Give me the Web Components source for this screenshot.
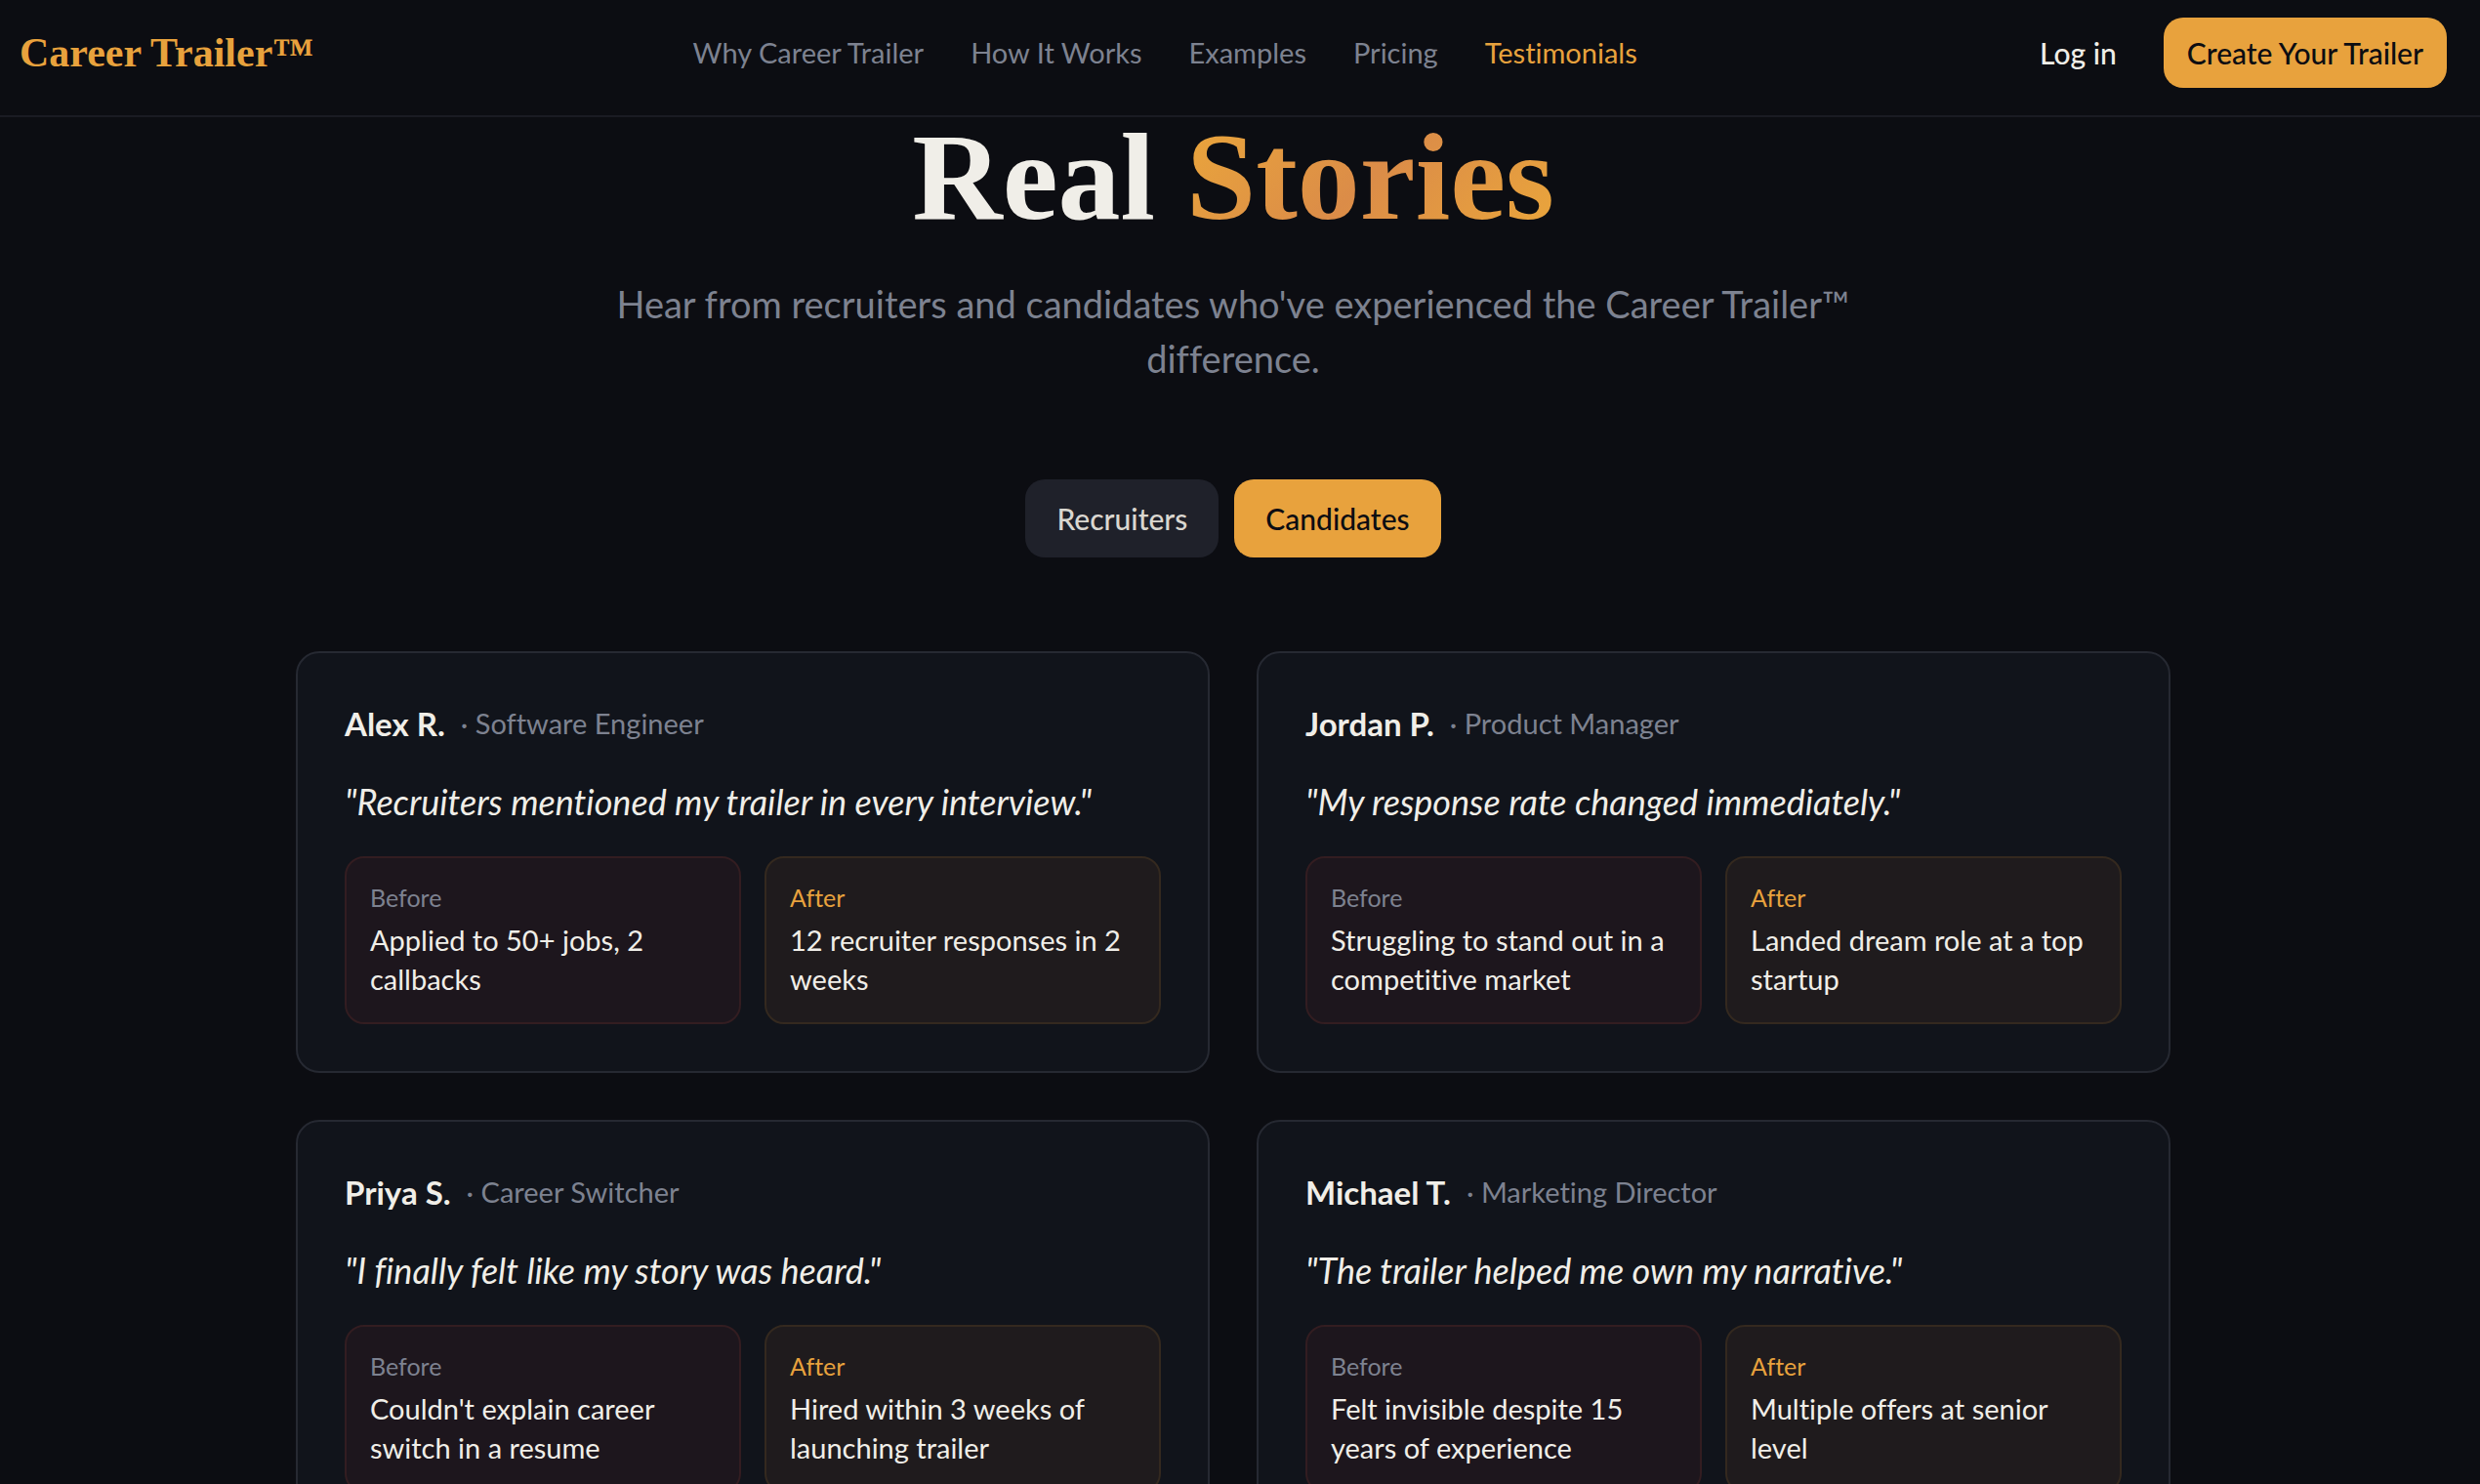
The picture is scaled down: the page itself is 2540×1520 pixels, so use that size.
<!DOCTYPE html>
<html lang="en">
<head>
<meta charset="utf-8">
<title>Career Trailer™ – Real Stories</title>
<style>
:root{
  --bg:#0c0d12;--line:#1a1b23;--card:#11141b;--card-line:#262932;
  --gold:#e8a23d;--ink:#f0eee8;--muted:#7d8290;--gutter:14px;
  --serif:"Liberation Serif",serif;
}
html,body{margin:0;height:100%;background:var(--bg)}
body{overflow:hidden;color:var(--ink);font:400 29px/40px Lato,"Liberation Sans",sans-serif;font-variant-ligatures:none}
</style>
</head>
<body>
<career-page></career-page>
<script>
function define(name, html){
  const template = document.createElement('template');
  template.innerHTML = html;
  customElements.define(name, class extends HTMLElement{
    constructor(){
      super();
      this.attachShadow({mode:'open'}).append(template.content.cloneNode(true));
    }
  });
}

define('site-header', `
<style>
:host{display:block;border-bottom:2px solid var(--line)}
header{display:flex;align-items:center;justify-content:space-between;padding:18px calc(20px + var(--gutter)) 28px 20px}
a{color:inherit;text-decoration:none}
.logo{font:700 42px/56px var(--serif);color:var(--gold)}
nav{display:flex;gap:48px;color:var(--muted)}
nav a[aria-current]{color:var(--gold)}
.actions{display:flex;align-items:center;gap:24px;font-size:30px;font-weight:500}
.login{padding:0 24px}
button{font:inherit;border:0;border-radius:20px;padding:16px 24px;background:var(--gold);color:var(--bg)}
</style>
<header>
  <a class="logo" href="#">Career Trailer™</a>
  <nav>
    <a href="#why">Why Career Trailer</a><a href="#how">How It Works</a><a href="#examples">Examples</a><a href="#pricing">Pricing</a><a href="#testimonials" aria-current="page">Testimonials</a>
  </nav>
  <div class="actions"><a class="login" href="#login">Log in</a><button type="button">Create Your Trailer</button></div>
</header>`);

define('page-hero', `
<style>
:host{display:block;text-align:center}
h1{margin:0 0 40px;font:700 128px/123px var(--serif)}
.accent{color:transparent;background:linear-gradient(135deg,#e8a23d 10%,#db8c48 50%,#e8a23d 90%);background-clip:text;-webkit-background-clip:text}
p{margin:0 auto;max-width:1344px;font-size:38px;line-height:56px;color:var(--muted)}
</style>
<h1>Real <span class="accent">Stories</span></h1>
<p><slot></slot></p>`);

define('tab-button', `
<style>
:host{display:block}
button{font:inherit;font-size:30px;font-weight:500;border:0;border-radius:20px;padding:20px 32px;background:#1f212a;color:#dad7d0}
:host([active]) button{background:var(--gold);color:var(--bg)}
</style>
<button type="button"><slot></slot></button>`);

define('outcome-box', `
<style>
:host{display:block;border:2px solid #331d21;border-radius:20px;padding:24px;background:#1d161d}
:host([after]){border-color:#34291f;background:#1f1b1d}
.label{font-size:25px;line-height:32px;margin-bottom:8px;color:var(--muted)}
:host([after]) .label{color:var(--gold)}
</style>
<div class="label"><slot name="label"></slot></div>
<div><slot></slot></div>`);

define('testimonial-card', `
<style>
:host{display:block;border:2px solid var(--card-line);border-radius:24px;padding:48px;background:var(--card)}
.who{display:flex;align-items:center;gap:16px;line-height:48px;margin-bottom:32px}
.name{font-size:33px;font-weight:700}
.role{color:var(--muted)}
blockquote{margin:0 0 32px;font-size:36px;line-height:48px;font-style:italic}
.outcomes{display:grid;grid-template-columns:1fr 1fr;gap:24px}
</style>
<div class="who"><span class="name"><slot name="name"></slot></span><span class="role">· <slot name="role"></slot></span></div>
<blockquote><slot name="quote"></slot></blockquote>
<div class="outcomes">
  <outcome-box><span slot="label">Before</span><slot name="before"></slot></outcome-box>
  <outcome-box after><span slot="label">After</span><slot name="after"></slot></outcome-box>
</div>`);

define('career-page', `
<style>
:host{display:block}
main{padding-right:var(--gutter)}
.tabs{display:flex;justify-content:center;gap:16px;padding:96px 0}
.cards{display:grid;grid-template-columns:1fr 1fr;gap:48px;max-width:1920px;margin:0 auto}
</style>
<site-header></site-header>
<main>
  <page-hero>Hear from recruiters and candidates who've experienced the Career Trailer™ difference.</page-hero>
  <div class="tabs"><tab-button>Recruiters</tab-button><tab-button active>Candidates</tab-button></div>
  <div class="cards">
    <testimonial-card>
      <span slot="name">Alex R.</span><span slot="role">Software Engineer</span>
      <span slot="quote">"Recruiters mentioned my trailer in every interview."</span>
      <span slot="before">Applied to 50+ jobs, 2 callbacks</span><span slot="after">12 recruiter responses in 2 weeks</span>
    </testimonial-card>
    <testimonial-card>
      <span slot="name">Jordan P.</span><span slot="role">Product Manager</span>
      <span slot="quote">"My response rate changed immediately."</span>
      <span slot="before">Struggling to stand out in a competitive market</span><span slot="after">Landed dream role at a top startup</span>
    </testimonial-card>
    <testimonial-card>
      <span slot="name">Priya S.</span><span slot="role">Career Switcher</span>
      <span slot="quote">"I finally felt like my story was heard."</span>
      <span slot="before">Couldn't explain career switch in a resume</span><span slot="after">Hired within 3 weeks of launching trailer</span>
    </testimonial-card>
    <testimonial-card>
      <span slot="name">Michael T.</span><span slot="role">Marketing Director</span>
      <span slot="quote">"The trailer helped me own my narrative."</span>
      <span slot="before">Felt invisible despite 15 years of experience</span><span slot="after">Multiple offers at senior level</span>
    </testimonial-card>
  </div>
</main>`);
</script>
</body>
</html>
